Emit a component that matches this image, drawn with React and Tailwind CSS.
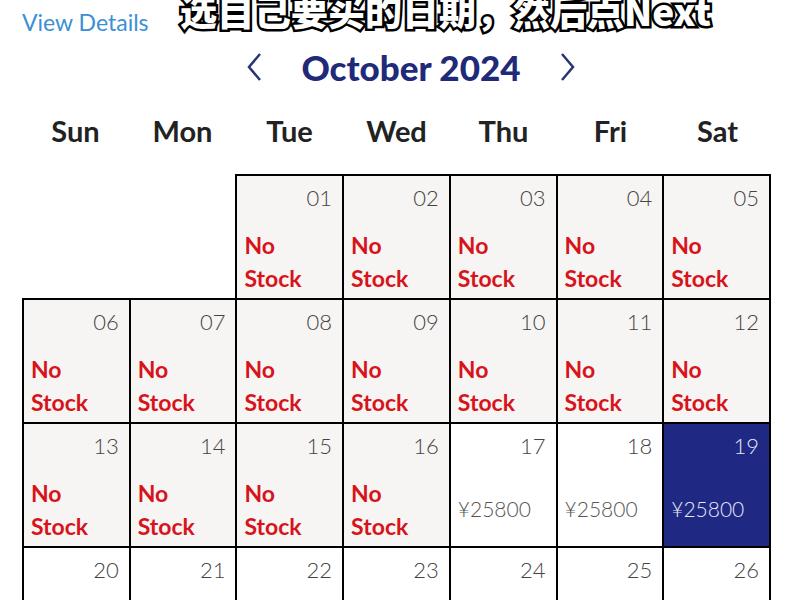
import React from 'react';

const days = ['Sun', 'Mon', 'Tue', 'Wed', 'Thu', 'Fri', 'Sat'];

// October 2024 starts on a Tuesday
const stockOut = [1, 2, 3, 4, 5, 6, 7, 8, 9, 10, 11, 12, 13, 14, 15, 16];
const priced = { 17: '¥25800', 18: '¥25800', 19: '¥25800' };
const selected = 19;

const buildWeeks = () => {
    const cells = [null, null];
    for (let d = 1; d <= 31; d++) cells.push(d);
    while (cells.length % 7) cells.push(null);
    const weeks = [];
    for (let i = 0; i < cells.length; i += 7) weeks.push(cells.slice(i, i + 7));
    return weeks;
};

const DayCell = ({ day }) => {
    if (!day) return <td className="p-0 border-0" />;
    const isOut = stockOut.includes(day);
    const isSel = day === selected;
    const bg = isSel ? 'bg-[#1f2883]' : isOut ? 'bg-[#f6f5f3]' : 'bg-white';
    return (
        <td className={`p-0 align-top h-[124px] border-2 border-black ${bg}`}>
            <div className="flex flex-col h-full">
                <div className={`text-right pr-[10px] pt-[10px] text-[22px] leading-[24px] font-light ${isSel ? 'text-[#e4e6f5]' : 'text-[#444]'}`}>
                    {String(day).padStart(2, '0')}
                </div>
                {isOut && (
                    <div className="mt-[19px] pl-[7px] text-[23px] leading-[33px] font-bold text-[#d7141c]">
                        No<br />Stock
                    </div>
                )}
                {priced[day] && (
                    <div className={`mt-[34px] pl-[7px] text-[21px] leading-[33px] font-light ${isSel ? 'text-[#e4e6f5]' : 'text-[#555]'}`}>
                        {priced[day]}
                    </div>
                )}
            </div>
        </td>
    );
};

const App = () => {
    const weeks = buildWeeks();

    return (
        <div className="relative w-[800px] h-[600px] overflow-hidden bg-white font-['Lato','Noto_Sans',sans-serif]">
            {/* subtitle overlay */}
            <div className="absolute left-[180px] top-[-12px] text-[37px] leading-[44px] font-black text-white whitespace-nowrap font-['Noto_Sans_CJK_SC',sans-serif] [-webkit-text-stroke:5px_black] [paint-order:stroke_fill]">
                选自己要买的日期，然后点Next
            </div>

            <div className="pt-[8px] pl-[22px] text-[23px] leading-[28px] text-[#3b8fd4]">View Details</div>

            <div className="flex items-center justify-center gap-[36px] mt-[11px] ml-[22px]">
                <svg width="20" height="30" viewBox="0 0 20 30" fill="none" stroke="#2b3575" strokeWidth="2.5">
                    <polyline points="15,2 4,15 15,28" />
                </svg>
                <div className="text-[35px] leading-[40px] font-black text-[#1f2a78]">October 2024</div>
                <svg width="20" height="30" viewBox="0 0 20 30" fill="none" stroke="#2b3575" strokeWidth="2.5">
                    <polyline points="5,2 16,15 5,28" />
                </svg>
            </div>

            <div className="grid grid-cols-7 w-[749px] ml-[22px] mt-[26px]">
                {days.map((d) => (
                    <div key={d} className="text-center text-[29px] leading-[36px] font-bold text-[#222]">{d}</div>
                ))}
            </div>

            <table className="table-fixed border-collapse w-[749px] ml-[22px] mt-[25px]">
                <tbody>
                    {weeks.map((week, i) => (
                        <tr key={i}>
                            {week.map((day, j) => (
                                <DayCell key={j} day={day} />
                            ))}
                        </tr>
                    ))}
                </tbody>
            </table>
        </div>
    );
};

export default App;
